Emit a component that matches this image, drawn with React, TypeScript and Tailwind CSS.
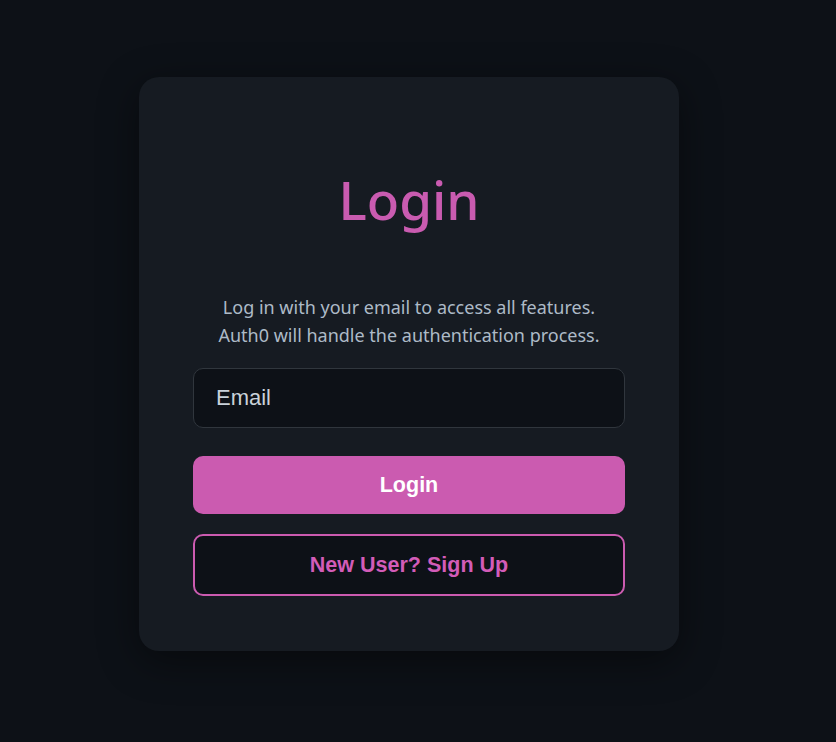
export default function App() {
  return (
    <div className="min-h-screen w-full bg-[#0d1117] flex items-center justify-center pr-[18px] pb-[14px]">
      <div className="w-[540px] h-[574px] bg-[#161b22] rounded-[20px] shadow-[0_10px_40px_rgba(0,0,0,0.45)] px-[54px] flex flex-col">
        <h1 className="mt-[88px] text-center text-[53px] leading-[70px] font-medium text-[#c95bb0] font-['Noto_Sans',sans-serif]">
          Login
        </h1>
        <p className="mt-[58px] text-center text-[18px] leading-[28px] text-[#adbac7] font-['Noto_Sans',sans-serif]">
          Log in with your email to access all features.
          <br />
          Auth0 will handle the authentication process.
        </p>
        <input
          type="email"
          placeholder="Email"
          className="mt-[19px] h-[60px] w-full rounded-[10px] border border-[#30363d] bg-[#0d1117] px-[22px] text-[22px] text-[#c9d1d9] placeholder:text-[#c9d1d9] font-['Liberation_Sans',Arial,sans-serif] outline-none"
        />
        <button className="mt-[28px] h-[58px] w-full rounded-[10px] bg-[#cb5bb0] text-white text-[21.5px] font-bold font-['Liberation_Sans',Arial,sans-serif]">
          Login
        </button>
        <button className="mt-[20px] h-[62px] w-full rounded-[10px] border-2 border-[#cb5bb0] bg-[#0d1117] text-[#d35cb8] text-[21.5px] font-bold font-['Liberation_Sans',Arial,sans-serif]">
          New User? Sign Up
        </button>
      </div>
    </div>
  );
}
